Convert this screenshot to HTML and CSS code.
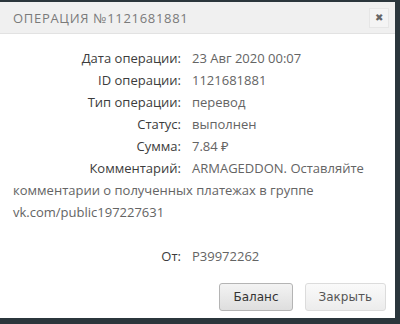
FILE: index.html
```html
<!DOCTYPE html>
<html lang="ru">
<head>
  <meta charset="UTF-8" />
  <title>Операция</title>
  <link rel="stylesheet" href="styles.css">
</head>
<body>

  <div class="dialog">
    <div class="dialog-head">
      <span class="dialog-title">Операция №1121681881</span>
      <button class="close">&#x2716;</button>
    </div>

    <div class="dialog-body">
      <div class="row"><span class="label">Дата операции:</span><span class="value">23 Авг 2020 00:07</span></div>
      <div class="row"><span class="label">ID операции:</span><span class="value">1121681881</span></div>
      <div class="row"><span class="label">Тип операции:</span><span class="value">перевод</span></div>
      <div class="row"><span class="label">Статус:</span><span class="value">выполнен</span></div>
      <div class="row"><span class="label">Сумма:</span><span class="value">7.84 &#8381;</span></div>
      <p class="comment"><span class="label">Комментарий:</span>ARMAGEDDON. Оставляйте комментарии о полученных платежах в группе vk.com/public197227631</p>
      <div class="row from"><span class="label">От:</span><span class="value">P39972262</span></div>
    </div>

    <div class="dialog-foot">
      <button class="btn btn-main">Баланс</button>
      <button class="btn">Закрыть</button>
    </div>
  </div>

</body>
</html>
```

FILE: styles.css
```css
body {
  margin: 0;
  background: #2b363c;
  font-family: "Open Sans", "Noto Sans", sans-serif;
}

.dialog {
  margin: 2px 5px 0 0;
  height: 316px;
  background: #fff;
  display: flex;
  flex-direction: column;
}

.dialog-head {
  height: 31px;
  background: #f0f0f0;
  border-bottom: 1px solid #e2e2e2;
  display: flex;
  align-items: center;
  justify-content: space-between;
  padding: 0 6px 0 13px;
}

.dialog-title {
  text-transform: uppercase;
  color: #7a7a7a;
  font-size: 13px;
  letter-spacing: 0.7px;
}

.close {
  width: 20px;
  height: 20px;
  padding: 0;
  border: 1px solid #e6e6e6;
  background: #f4f4f4;
  color: #666;
  font-size: 10px;
  line-height: 18px;
  cursor: pointer;
}

.dialog-body {
  padding: 13px 13px 0 13px;
  font-size: 13px;
  line-height: 22px;
}

.label {
  display: inline-block;
  width: 168px;
  margin-right: 11px;
  text-align: right;
  color: #3c3c3c;
}

.value,
.comment {
  color: #646464;
}

.comment {
  margin: 0;
}

.from {
  margin-top: 22px;
}

.dialog-foot {
  margin-top: auto;
  display: flex;
  justify-content: flex-end;
  gap: 12px;
  padding: 0 9px 7px 0;
}

.btn {
  height: 28px;
  padding: 0 13px;
  font-family: "DejaVu Sans", sans-serif;
  font-size: 12px;
  color: #555;
  background: linear-gradient(#fafafa, #ececec);
  border: 1px solid #dcdcdc;
  border-radius: 3px;
  cursor: pointer;
}

.btn-main {
  color: #333;
  background: linear-gradient(#f3f3f3, #dedede);
  border-color: #b4b4b4;
}
```
